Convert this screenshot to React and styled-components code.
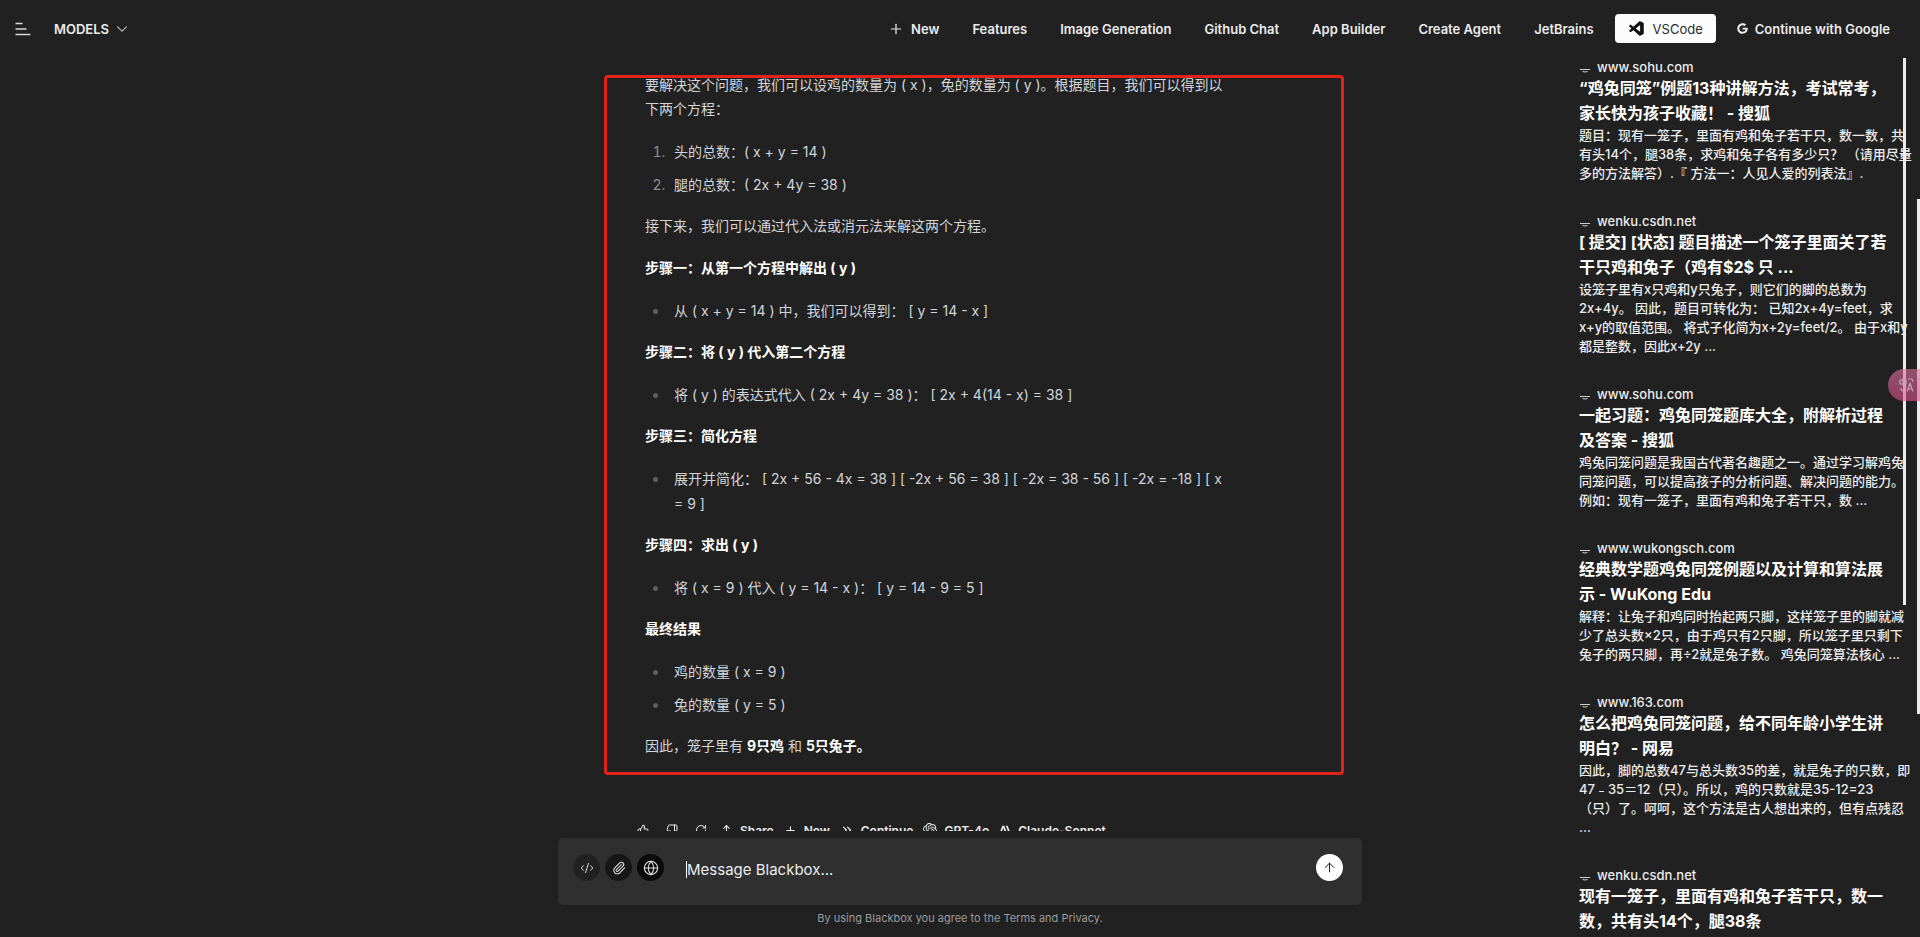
import React from "react";
import styled, { createGlobalStyle, css } from "styled-components";
import {
	ThumbsUp,
	ThumbsDown,
	RotateCw,
	Upload,
	Plus,
	ChevronsRight,
	ChevronDown,
	ArrowUp,
	Globe,
	Paperclip,
	CodeXml,
} from "lucide-react";
import { VscVscode } from "react-icons/vsc";
import { FaGoogle } from "react-icons/fa";
import { SiOpenai, SiAnthropic } from "react-icons/si";

const GlobalStyle = createGlobalStyle`
	* {
		box-sizing: border-box;
	}
	body {
		margin: 0;
		background: #212121;
		color: #ececec;
		font-family: Inter, "Noto Sans CJK SC", sans-serif;
		font-size: 13px;
	}
	button, input {
		font: inherit;
		color: inherit;
		border: none;
		background: none;
		padding: 0;
	}
	p, h3, ul, ol {
		margin: 0;
		padding: 0;
	}
	a {
		color: inherit;
		text-decoration: none;
	}
`;

const Page = styled.div`
	position: relative;
	height: 100vh;
	display: flex;
	flex-direction: column;
	overflow: hidden;
`;

const Header = styled.header`
	flex: none;
	display: flex;
	align-items: center;
	justify-content: space-between;
	height: 57px;
	padding: 0 14px 0 15px;
`;

const HeaderGroup = styled.div`
	display: flex;
	align-items: center;
	gap: ${(props) => props.$gap}px;
`;

const MenuButton = styled.button`
	display: flex;
`;

const ModelsButton = styled.button`
	display: flex;
	align-items: center;
	gap: 4px;
	font-weight: 600;
	svg {
		color: #a8a8a8;
	}
`;

const NavLink = styled.a`
	display: flex;
	align-items: center;
	gap: 7px;
	height: 29px;
	padding: 0 16px;
	border-radius: 4px;
	font-weight: 600;
	white-space: nowrap;
	${(props) =>
		props.$light &&
		css`
			padding: 0 13px;
			margin: 0 4px;
			background: #fcfcfc;
			color: #2b2b2b;
			font-weight: 400;
			svg {
				color: #111;
			}
		`}
`;

const Body = styled.div`
	flex: 1;
	min-height: 0;
	display: grid;
	grid-template-columns: minmax(0, 1fr) 804px minmax(0, 1fr);
`;

const Center = styled.main`
	grid-column: 2;
	display: flex;
	flex-direction: column;
	min-height: 0;
`;

const Thread = styled.div`
	flex: 1;
	min-height: 0;
	overflow: hidden;
	padding: 16px 46px 0;
`;

const Answer = styled.article`
	position: relative;
	padding: 0 70px 0 41px;
	color: #d1d5db;
	font-size: 14px;
	line-height: 24px;
	p {
		margin-bottom: 18px;
	}
	strong {
		color: #fff;
		font-weight: 700;
	}
`;

const Outline = styled.div`
	position: absolute;
	top: 2px;
	left: 0;
	width: 740px;
	height: 700px;
	border: 3px solid #e2231a;
	border-radius: 4px;
`;

const listStyle = css`
	padding-left: 24px;
	margin-bottom: 17px;
	line-height: 25px;
	li {
		padding-left: 5px;
	}
	li + li {
		margin-top: 8px;
	}
	li::marker {
		color: #8a8f98;
	}
`;

const NumberList = styled.ol`
	${listStyle}
`;

const BulletList = styled.ul`
	${listStyle}
	li::marker {
		color: #5b5f66;
	}
`;

const Actions = styled.div`
	display: flex;
	align-items: center;
	gap: 10px;
	margin: 62px 0 0 29px;
	height: 20px;
	font-size: 12px;
	font-weight: 600;
`;

const ActionButton = styled.button`
	display: flex;
	align-items: center;
	gap: 7px;
	white-space: nowrap;
`;

const IconAction = styled(ActionButton)`
	width: 19px;
	justify-content: center;
`;

const Composer = styled.form`
	flex: none;
	display: flex;
	align-items: flex-start;
	gap: 5px;
	height: 67px;
	margin-top: 7px;
	padding: 16px 19px 0 15px;
	border-radius: 5px;
	background: #2f2f2f;
`;

const RoundButton = styled.button`
	flex: none;
	display: flex;
	align-items: center;
	justify-content: center;
	width: 27px;
	height: 27px;
	border-radius: 50%;
	background: ${(props) => props.$bg};
	color: ${(props) => props.$color || "#e5e5e5"};
`;

const MessageField = styled.div`
	flex: 1;
	min-width: 0;
	display: flex;
	align-items: center;
	height: 30px;
	margin-left: 17px;
`;

const Caret = styled.span`
	width: 1px;
	height: 17px;
	background: #fff;
`;

const MessageInput = styled.input`
	flex: 1;
	min-width: 0;
	height: 30px;
	font-size: 15px;
	outline: none;
	caret-color: transparent;
	&::placeholder {
		color: #ececec;
		opacity: 1;
	}
`;

const Terms = styled.p`
	flex: none;
	height: 32px;
	line-height: 26px;
	text-align: center;
	font-size: 11px;
	color: #9b9b9b;
`;

const Sidebar = styled.aside`
	grid-column: 3;
	justify-self: end;
	position: relative;
	width: 341px;
	min-height: 0;
	overflow: hidden;
`;

const Result = styled.article`
	margin-bottom: 28px;
`;

const Site = styled.div`
	display: flex;
	align-items: center;
	gap: 6px;
	height: 19px;
	font-weight: 500;
`;

const ResultTitle = styled.h3`
	font-size: 16px;
	line-height: 25px;
	font-weight: 700;
	color: #fff;
	white-space: pre;
`;

const ResultText = styled.p`
	line-height: 19px;
	font-weight: 500;
	white-space: pre;
`;

const ScrollThumb = styled.div`
	position: absolute;
	top: ${(props) => props.$top}px;
	right: ${(props) => props.$right}px;
	width: 3px;
	height: ${(props) => props.$height}px;
	background: #ececec;
`;

const TranslateButton = styled.button`
	position: absolute;
	top: 369px;
	right: 0;
	display: flex;
	align-items: center;
	justify-content: flex-end;
	width: 32px;
	height: 32px;
	padding-right: 5px;
	border-radius: 16px 0 0 16px;
	background: linear-gradient(180deg, rgba(221, 115, 160, 0.6), rgba(221, 80, 140, 0.6));
	color: #c9a3b4;
`;

const navItems = ["Features", "Image Generation", "Github Chat", "App Builder", "Create Agent", "JetBrains"];

const results = [
	{
		site: "www.sohu.com",
		title: "“鸡兔同笼”例题13种讲解方法，考试常考，\n家长快为孩子收藏！ - 搜狐",
		text: "题目：现有一笼子，里面有鸡和兔子若干只，数一数，共\n有头14个，腿38条，求鸡和兔子各有多少只？ （请用尽量\n多的方法解答）.『 方法一：人见人爱的列表法』.",
	},
	{
		site: "wenku.csdn.net",
		title: "[ 提交] [状态] 题目描述一个笼子里面关了若\n干只鸡和兔子（鸡有$2$ 只 ...",
		text: "设笼子里有x只鸡和y只兔子，则它们的脚的总数为\n2x+4y。 因此，题目可转化为： 已知2x+4y=feet，求\nx+y的取值范围。 将式子化简为x+2y=feet/2。 由于x和y\n都是整数，因此x+2y ...",
	},
	{
		site: "www.sohu.com",
		title: "一起习题：鸡兔同笼题库大全，附解析过程\n及答案 - 搜狐",
		text: "鸡兔同笼问题是我国古代著名趣题之一。通过学习解鸡兔\n同笼问题，可以提高孩子的分析问题、解决问题的能力。\n例如：现有一笼子，里面有鸡和兔子若干只，数 ...",
	},
	{
		site: "www.wukongsch.com",
		title: "经典数学题鸡兔同笼例题以及计算和算法展\n示 - WuKong Edu",
		text: "解释：让兔子和鸡同时抬起两只脚，这样笼子里的脚就减\n少了总头数×2只，由于鸡只有2只脚，所以笼子里只剩下\n兔子的两只脚，再÷2就是兔子数。 鸡兔同笼算法核心 ...",
	},
	{
		site: "www.163.com",
		title: "怎么把鸡兔同笼问题，给不同年龄小学生讲\n明白？ - 网易",
		text: "因此，脚的总数47与总头数35的差，就是兔子的只数，即\n47﹣35＝12（只）。所以，鸡的只数就是35-12=23\n（只）了。呵呵，这个方法是古人想出来的，但有点残忍\n...",
	},
	{
		site: "wenku.csdn.net",
		title: "现有一笼子，里面有鸡和兔子若干只，数一\n数，共有头14个，腿38条",
		text: "",
	},
];

function MenuIcon() {
	return (
		<svg width="16" height="14" viewBox="0 0 16 14" stroke="#d9d9d9" strokeWidth="1.4">
			<path d="M.5 1.5h7M.5 7h11M.5 12.5h15" />
		</svg>
	);
}

function SiteIcon() {
	return (
		<svg width="12" height="12" viewBox="0 0 12 12" fill="none" stroke="#d0d0d0">
			<path d="M1 8.5h10M3.5 10.5q2.5 1 5 0" />
		</svg>
	);
}

function TranslateIcon() {
	return (
		<svg width="16" height="16" viewBox="0 0 16 16" fill="none" stroke="currentColor" strokeWidth="1.2">
			<path d="M1 3h6v4H1zM4 1v8M9 2h3q2 0 2 3M2 11q0 3 3 3M8 14.5l3-8 3 8M9 12h4" />
		</svg>
	);
}

function App() {
	return (
		<>
			<GlobalStyle />
			<Page>
				<Header>
					<HeaderGroup $gap={23}>
						<MenuButton aria-label="Menu">
							<MenuIcon />
						</MenuButton>
						<ModelsButton>
							MODELS
							<ChevronDown size={18} strokeWidth={1.5} />
						</ModelsButton>
					</HeaderGroup>
					<HeaderGroup as="nav" $gap={1}>
						<NavLink href="#">
							<Plus size={16} strokeWidth={1.8} />
							New
						</NavLink>
						{navItems.map((item) => (
							<NavLink href="#" key={item}>
								{item}
							</NavLink>
						))}
						<NavLink href="#" $light>
							<VscVscode size={18} />
							VSCode
						</NavLink>
						<NavLink href="#">
							<FaGoogle size={11} />
							Continue with Google
						</NavLink>
					</HeaderGroup>
				</Header>

				<Body>
					<Center>
						<Thread>
							<Answer>
								<Outline />
								<p>
									要解决这个问题，我们可以设鸡的数量为 ( x )，兔的数量为 ( y )。根据题目，我们可以得到以
									<br />
									下两个方程：
								</p>
								<NumberList>
									<li>头的总数：( x + y = 14 )</li>
									<li>腿的总数：( 2x + 4y = 38 )</li>
								</NumberList>
								<p>接下来，我们可以通过代入法或消元法来解这两个方程。</p>
								<p>
									<strong>步骤一：从第一个方程中解出 ( y )</strong>
								</p>
								<BulletList>
									<li>从 ( x + y = 14 ) 中，我们可以得到： [ y = 14 - x ]</li>
								</BulletList>
								<p>
									<strong>步骤二：将 ( y ) 代入第二个方程</strong>
								</p>
								<BulletList>
									<li>将 ( y ) 的表达式代入 ( 2x + 4y = 38 )： [ 2x + 4(14 - x) = 38 ]</li>
								</BulletList>
								<p>
									<strong>步骤三：简化方程</strong>
								</p>
								<BulletList>
									<li>
										展开并简化： [ 2x + 56 - 4x = 38 ] [ -2x + 56 = 38 ] [ -2x = 38 - 56 ] [ -2x = -18 ] [ x
										<br />= 9 ]
									</li>
								</BulletList>
								<p>
									<strong>步骤四：求出 ( y )</strong>
								</p>
								<BulletList>
									<li>将 ( x = 9 ) 代入 ( y = 14 - x )： [ y = 14 - 9 = 5 ]</li>
								</BulletList>
								<p>
									<strong>最终结果</strong>
								</p>
								<BulletList>
									<li>鸡的数量 ( x = 9 )</li>
									<li>兔的数量 ( y = 5 )</li>
								</BulletList>
								<p>
									因此，笼子里有 <strong>9只鸡</strong> 和 <strong>5只兔子。</strong>
								</p>
							</Answer>
							<Actions>
								<IconAction aria-label="Like"><ThumbsUp size={12} /></IconAction>
								<IconAction aria-label="Dislike"><ThumbsDown size={12} /></IconAction>
								<IconAction aria-label="Retry"><RotateCw size={12} /></IconAction>
								<ActionButton><Upload size={13} />Share</ActionButton>
								<ActionButton><Plus size={13} />New</ActionButton>
								<ActionButton><ChevronsRight size={14} />Continue</ActionButton>
								<ActionButton><SiOpenai size={14} />GPT-4o</ActionButton>
								<ActionButton><SiAnthropic size={12} />Claude-Sonnet</ActionButton>
							</Actions>
						</Thread>
						<Composer>
							<RoundButton type="button" aria-label="Code" $bg="#212121">
								<CodeXml size={14} strokeWidth={1.6} />
							</RoundButton>
							<RoundButton type="button" aria-label="Attach" $bg="#171717">
								<Paperclip size={14} strokeWidth={1.8} />
							</RoundButton>
							<RoundButton type="button" aria-label="Web" $bg="#0a0a0a">
								<Globe size={16} strokeWidth={1.6} />
							</RoundButton>
							<MessageField>
								<Caret />
								<MessageInput aria-label="Message" placeholder="Message Blackbox..." />
							</MessageField>
							<RoundButton aria-label="Send" $bg="#fff" $color="#212121">
								<ArrowUp size={15} strokeWidth={1.6} />
							</RoundButton>
						</Composer>
						<Terms>By using Blackbox you agree to the Terms and Privacy.</Terms>
					</Center>
					<Sidebar>
						{results.map((result, i) => (
							<Result key={i}>
								<Site>
									<SiteIcon />
									{result.site}
								</Site>
								<ResultTitle>{result.title}</ResultTitle>
								<ResultText>{result.text}</ResultText>
							</Result>
						))}
						<ScrollThumb $top={1} $right={14} $height={547} />
					</Sidebar>
				</Body>
				<ScrollThumb $top={199} $right={0} $height={515} />
				<TranslateButton aria-label="Translate">
					<TranslateIcon />
				</TranslateButton>
			</Page>
		</>
	);
}

export default App;
